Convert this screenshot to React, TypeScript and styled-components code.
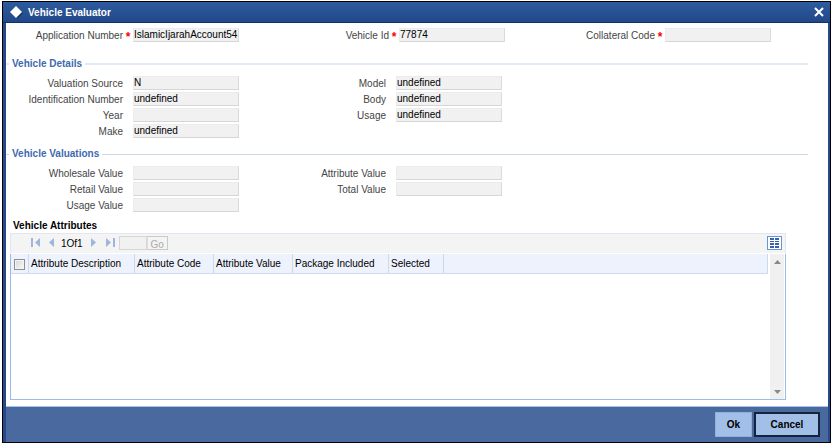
import React from "react";
import styled, { createGlobalStyle } from "styled-components";

const GlobalStyle = createGlobalStyle`
  *, *::before, *::after { box-sizing: border-box; }
  body {
    margin: 0;
    background: #fff;
    color: #000;
    font: 10px/14px "Liberation Sans", Arial, sans-serif;
  }
  button, input { font: inherit; }
`;

const Page = styled.div`
  display: flex;
  min-height: 100vh;
  padding: 1px 2px 2px;
`;

const Dialog = styled.main`
  display: flex;
  flex: 1;
  flex-direction: column;
  min-width: 0;
  border: 1px solid #000;
  background: #27498c;
`;

const TitleBar = styled.header`
  display: flex;
  align-items: center;
  height: 21px;
  padding: 0 6px;
  border-bottom: 1px solid #12306d;
  background: linear-gradient(#2d5b9e, #224889);
  color: #fff;
`;

const Title = styled.h1`
  flex: 1;
  margin: 0 0 0 5px;
  padding-top: 1px;
  font-size: 10px;
  line-height: 14px;
`;

const CloseButton = styled.button`
  display: flex;
  padding: 0;
  border: 0;
  background: none;
  color: #fff;
`;

const Body = styled.div`
  display: flex;
  flex: 1;
  flex-direction: column;
  margin: 0 2px 0 3px;
  padding-top: 5px;
  border-bottom: 1px solid #a9c3e8;
  background: #fff;
`;

const KeyFields = styled.div`
  display: grid;
  grid-template-columns: repeat(3, 1fr);
  margin: 0 24px 15px 0;
`;

const Section = styled.fieldset<{ $rule: string; $after: number }>`
  display: grid;
  grid-template-columns: repeat(3, 1fr);
  align-items: start;
  min-width: 0;
  margin: 0 20px ${(p) => p.$after}px 0;
  padding: 5px 13px 0 0;
  border: 0;
  border-top: ${(p) => p.$rule};
`;

const Legend = styled.legend`
  margin-left: 3px;
  padding: 0 3px;
  color: #3f6aae;
  font-weight: bold;
`;

const Column = styled.div`
  display: grid;
  gap: 2px;
`;

const FieldRow = styled.div`
  display: grid;
  grid-template-columns: 117px 10px 106px;
  grid-template-rows: 14px;
  align-items: center;
`;

const Label = styled.label`
  padding-top: 2px;
  color: #444;
  text-align: right;
  white-space: nowrap;
`;

const Required = styled.span`
  padding-top: 4px;
  color: #f00;
  font-size: 12px;
  font-weight: bold;
  text-align: center;
`;

const TextBox = styled.input`
  grid-column: 3;
  width: 100%;
  min-width: 0;
  height: 14px;
  padding: 0;
  border: 1px solid;
  border-color: #ececec #dadada #d6d6d6 #ececec;
  background: #f1f1f1;
  color: #000;
`;

const GridTitle = styled.h2`
  margin: 0 0 0 7px;
  font-size: 10px;
  line-height: 14px;
`;

const GridPanel = styled.section`
  display: flex;
  flex: 1;
  flex-direction: column;
  margin: 0 42px 6px 4px;
`;

const Toolbar = styled.div`
  display: flex;
  align-items: center;
  height: 20px;
  padding: 0 3px 2px 20px;
  border: 1px solid #dfe7f2;
  border-bottom: 0;
  background: #f4f4f4;
`;

const Pager = styled.nav`
  display: flex;
  flex: 1;
  align-items: center;
  color: #9fb6dc;
`;

const PagerButton = styled.button`
  display: flex;
  padding: 0;
  border: 0;
  background: none;
  color: inherit;
`;

const PageCount = styled.span`
  margin: 2px 8px 0 7px;
  color: #000;
`;

const PageInput = styled.input`
  width: 28px;
  height: 14px;
  margin-left: 4px;
  padding: 0 1px;
  border: 1px solid #d6d6d6;
  background: #f1f1f1;
`;

const GoButton = styled.button`
  width: 21px;
  height: 14px;
  padding: 2px 0 0;
  border: 1px solid #cacaca;
  border-left-color: #dedede;
  background: #f4f4f4;
  color: #aaa;
  line-height: 11px;
`;

const ViewButton = styled.button`
  display: flex;
  align-items: center;
  justify-content: center;
  width: 15px;
  height: 14px;
  padding: 0;
  border: 1px solid #6d94cc;
  background: #fff;
`;

const GridFrame = styled.div`
  display: flex;
  flex: 1;
  margin-top: 1px;
  border: solid #9ebbe3;
  border-width: 0 1px 1px;
`;

const TableArea = styled.div`
  flex: 1;
  min-width: 0;
`;

const Table = styled.table`
  width: 100%;
  border-collapse: separate;
  border-spacing: 0;
  table-layout: fixed;
`;

const HeadCell = styled.th<{ $width?: number }>`
  width: ${(p) => (p.$width ? `${p.$width}px` : "auto")};
  height: 20px;
  padding: 1px 0 0 2px;
  border-right: 1px solid #cbd9ec;
  border-bottom: 1px solid #cbdcf2;
  background: #eef2fc;
  font-weight: normal;
  text-align: left;
  white-space: nowrap;
`;

const CheckBox = styled.input`
  display: block;
  width: 11px;
  height: 11px;
  margin: 0 0 0 1px;
  appearance: none;
  border: 1px solid #8e8f8f;
  background: linear-gradient(135deg, #d5d5d5, #fafafa);
  box-shadow: inset 0 0 0 1px #f4f4f4;
`;

const ScrollTrack = styled.div`
  display: flex;
  flex-direction: column;
  justify-content: space-between;
  width: 14px;
  margin: 0 1px 0 2px;
  background: #f0f0f0;
`;

const ScrollButton = styled.button`
  display: flex;
  align-items: center;
  justify-content: center;
  height: 15px;
  padding: 0;
  border: 0;
  background: none;
`;

const Footer = styled.footer`
  display: flex;
  justify-content: flex-end;
  gap: 2px;
  height: 35px;
  margin: 0 2px 0 3px;
  padding: 5px 8px 5px 0;
  background: #49699f;
`;

const ActionButton = styled.button<{ $width: number; $focused?: boolean }>`
  width: ${(p) => p.$width}px;
  height: 25px;
  padding: 0;
  border: ${(p) => (p.$focused ? "2px solid #14243f" : "1px solid #8fb0dd")};
  background: #a1bfe7;
  color: #000;
  font-weight: bold;
`;

type FieldProps = { id: string; label: string; value?: string; required?: boolean };

function Field({ id, label, value = "", required }: FieldProps) {
  return (
    <FieldRow>
      <Label htmlFor={id}>{label}</Label>
      {required && <Required aria-hidden="true">*</Required>}
      <TextBox id={id} defaultValue={value} readOnly required={required} />
    </FieldRow>
  );
}

function PagerIcon({ forward, bar }: { forward?: boolean; bar?: boolean }) {
  const width = bar ? 9 : 5;
  return (
    <svg width={width} height="9" viewBox={`0 0 ${width} 9`} fill="currentColor" aria-hidden="true">
      {bar && <rect x={forward ? 7 : 0} y="0" width="2" height="9" />}
      <path
        d={
          forward
            ? "M0 0 L5 4.5 L0 9Z"
            : bar
              ? "M9 0 L4 4.5 L9 9Z"
              : "M5 0 L0 4.5 L5 9Z"
        }
      />
    </svg>
  );
}

const PreviousButton = styled(PagerButton)`
  margin-left: 9px;
`;

const LastButton = styled(PagerButton)`
  margin-left: 10px;
`;

const columns = [
  { name: "Attribute Description", width: 106 },
  { name: "Attribute Code", width: 79 },
  { name: "Attribute Value", width: 79 },
  { name: "Package Included", width: 96 },
  { name: "Selected", width: 55 },
];

export default function App() {
  return (
    <>
      <GlobalStyle />
      <Page>
        <Dialog aria-labelledby="title">
          <TitleBar>
            <svg width="14" height="14" viewBox="0 0 14 14" aria-hidden="true">
              <path d="M7 2 L14 8 L8 14Z" fill="#12305f" />
              <path d="M7 1 L13 7 L7 13 L1 7Z" fill="#fff" />
            </svg>
            <Title id="title">Vehicle Evaluator</Title>
            <CloseButton type="button" aria-label="Close">
              <svg width="10" height="10" viewBox="0 0 10 10" stroke="currentColor" strokeWidth="2">
                <path d="M1 1 L9 9 M9 1 L1 9" />
              </svg>
            </CloseButton>
          </TitleBar>
          <Body>
            <KeyFields>
              <Field id="application" label="Application Number" value="IslamicIjarahAccount54" required />
              <Field id="vehicle" label="Vehicle Id" value="77874" required />
              <Field id="collateral" label="Collateral Code" required />
            </KeyFields>

            <Section $rule="2px solid #e1eaf6" $after={9}>
              <Legend>Vehicle Details</Legend>
              <Column>
                <Field id="source" label="Valuation Source" value="N" />
                <Field id="identification" label="Identification Number" value="undefined" />
                <Field id="year" label="Year" />
                <Field id="make" label="Make" value="undefined" />
              </Column>
              <Column>
                <Field id="model" label="Model" value="undefined" />
                <Field id="body" label="Body" value="undefined" />
                <Field id="usage" label="Usage" value="undefined" />
              </Column>
            </Section>

            <Section $rule="1px solid #ccdaeb" $after={7}>
              <Legend>Vehicle Valuations</Legend>
              <Column>
                <Field id="wholesale" label="Wholesale Value" />
                <Field id="retail" label="Retail Value" />
                <Field id="usage-value" label="Usage Value" />
              </Column>
              <Column>
                <Field id="attribute-value" label="Attribute Value" />
                <Field id="total" label="Total Value" />
              </Column>
            </Section>

            <GridTitle id="grid-title">Vehicle Attributes</GridTitle>
            <GridPanel aria-labelledby="grid-title">
              <Toolbar>
                <Pager aria-label="Pages">
                  <PagerButton type="button" aria-label="First page">
                    <PagerIcon bar />
                  </PagerButton>
                  <PreviousButton type="button" aria-label="Previous page">
                    <PagerIcon />
                  </PreviousButton>
                  <PageCount>1Of1</PageCount>
                  <PagerButton type="button" aria-label="Next page">
                    <PagerIcon forward />
                  </PagerButton>
                  <LastButton type="button" aria-label="Last page">
                    <PagerIcon forward bar />
                  </LastButton>
                  <PageInput aria-label="Page number" disabled />
                  <GoButton type="button" disabled>
                    Go
                  </GoButton>
                </Pager>
                <ViewButton type="button" aria-label="Single record view">
                  <svg width="9" height="10" viewBox="0 0 9 10" aria-hidden="true">
                    <path d="M0 0h4v2H0z M5 0h4v2H5z M0 3h4v1H0z M5 3h4v1H5z M0 5h4v2H0z M5 5h4v2H5z M0 8h4v2H0z M5 8h4v2H5z" fill="#3564b0" />
                  </svg>
                </ViewButton>
              </Toolbar>
              <GridFrame>
                <TableArea>
                  <Table>
                    <thead>
                      <tr>
                        <HeadCell $width={18}>
                          <CheckBox type="checkbox" aria-label="Select all rows" />
                        </HeadCell>
                        {columns.map((c) => (
                          <HeadCell key={c.name} $width={c.width}>
                            {c.name}
                          </HeadCell>
                        ))}
                        <HeadCell />
                      </tr>
                    </thead>
                  </Table>
                </TableArea>
                <ScrollTrack>
                  <ScrollButton type="button" aria-label="Scroll up">
                    <svg width="7" height="4" viewBox="0 0 7 4"><path d="M0 4 L3.5 0 L7 4Z" fill="#888" /></svg>
                  </ScrollButton>
                  <ScrollButton type="button" aria-label="Scroll down">
                    <svg width="7" height="4" viewBox="0 0 7 4"><path d="M0 0 L3.5 4 L7 0Z" fill="#888" /></svg>
                  </ScrollButton>
                </ScrollTrack>
              </GridFrame>
            </GridPanel>
          </Body>
          <Footer>
            <ActionButton type="button" $width={37}>Ok</ActionButton>
            <ActionButton type="button" $width={66} $focused>Cancel</ActionButton>
          </Footer>
        </Dialog>
      </Page>
    </>
  );
}
